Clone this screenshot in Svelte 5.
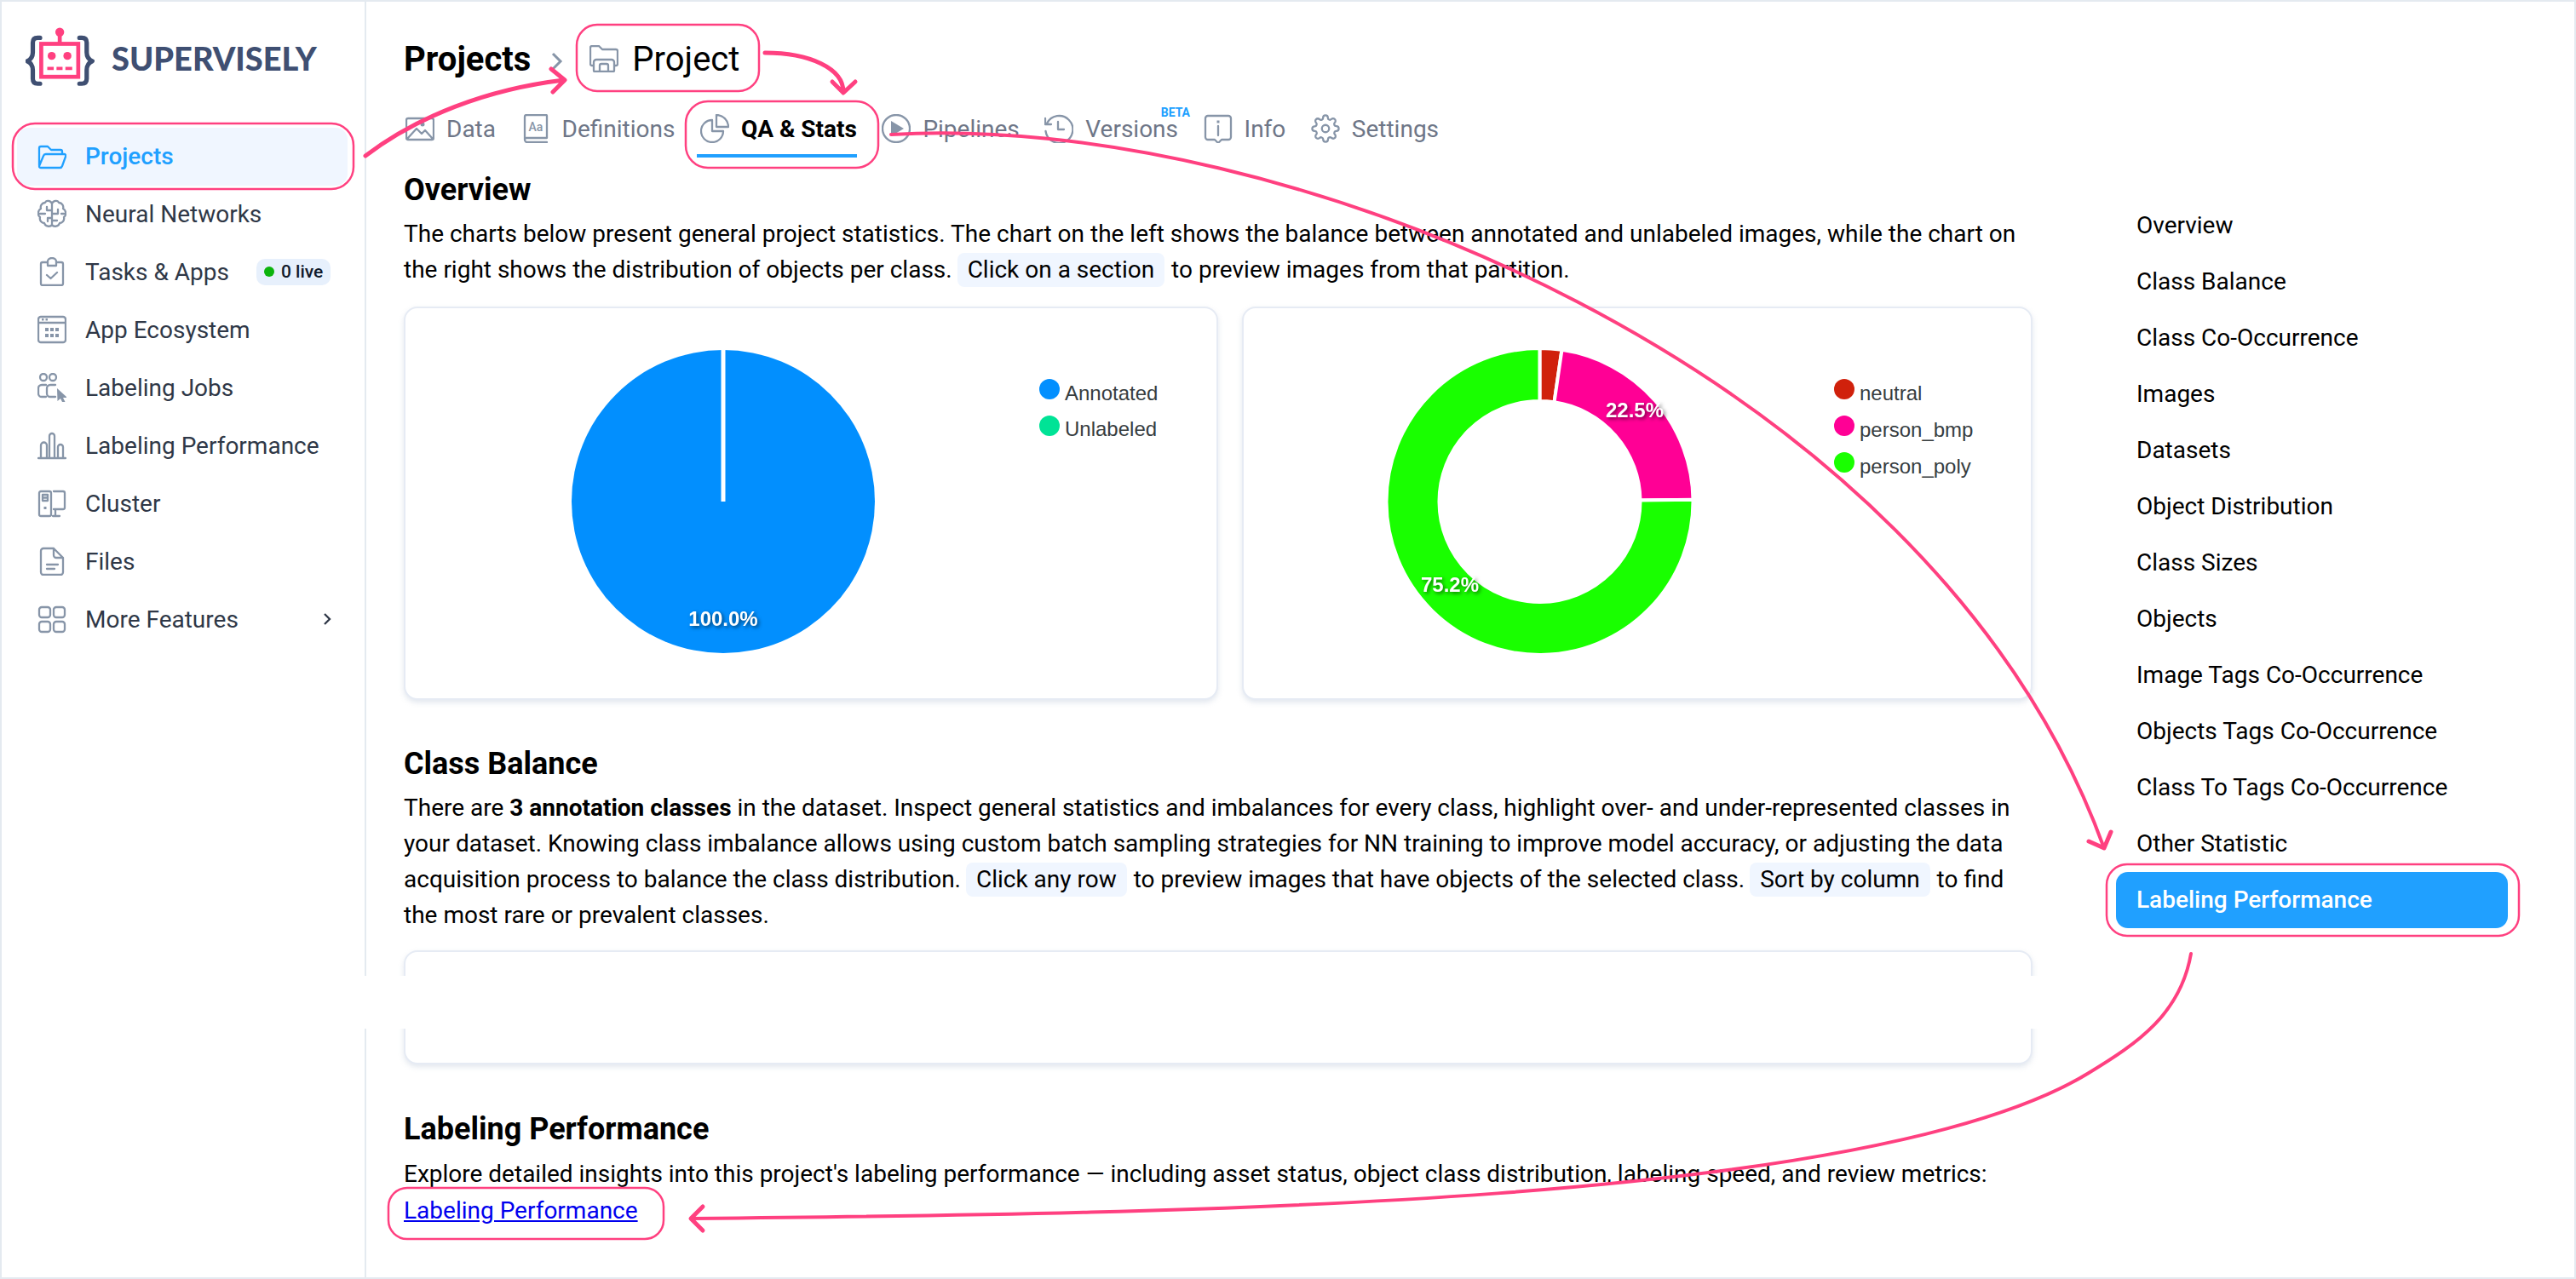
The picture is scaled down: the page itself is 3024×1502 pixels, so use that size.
<script>
  const sideItems = [
    { label: 'Projects', active: true, d: 'M2 28V8a2 2 0 0 1 2-2h8l4 4h11a2 2 0 0 1 2 2v3M2 29 7 17a3 3 0 0 1 3-2h21a2 2 0 0 1 2 3l-4 11a3 3 0 0 1-3 2H4a2 2 0 0 1-2-2z' },
    { label: 'Neural Networks', d: 'M17 4V30M17 5C15 1 10 1 9 4 5 4 3 8 4 11 0 13 0 19 3 21 2 25 5 28 8 28 9 32 15 33 17 30M17 5C19 1 24 1 25 4 29 4 31 8 30 11 34 13 34 19 31 21 32 25 29 28 26 28 25 32 19 33 17 30M17 13H11V9M17 22H12V26M3 17H9M17 17H24V12M17 25H23M31 17H28' },
    { label: 'Tasks & Apps', badge: '0 live', d: 'M11 6H6A2 2 0 0 0 4 8V31A2 2 0 0 0 6 33H28A2 2 0 0 0 30 31V8A2 2 0 0 0 28 6H23M12 10V5A5 4 0 0 1 22 5V10ZM11 21 15.500 25 23 18' },
    { label: 'App Ecosystem', d: 'M4 2H30A3 3 0 0 1 33 5V29A3 3 0 0 1 30 32H4A3 3 0 0 1 1 29V5A3 3 0 0 1 4 2ZM1 9H33', f: 'M5 4h2.500v2.500H5zM9.500 4H12v2.500H9.500zM9 15h4v4H9zM15 15h4v4h-4zM21 15h4v4h-4zM9 22h4v4H9zM15 22h4v4h-4zM21 22h4v4h-4z' },
    { label: 'Labeling Jobs', d: 'M11 5A4 4 0 1 1 3 5 4 4 0 1 1 11 5ZM22 5A4 4 0 1 1 14 5 4 4 0 1 1 22 5ZM10 14H5A4 4 0 0 0 1 18V24A4 4 0 0 0 5 28H10M21 14H15A4 4 0 0 0 11 18V24A4 4 0 0 0 15 28H21', f: 'M23 18 35 29 30 29 33 35 30 36 27 30 23.500 33Z' },
    { label: 'Labeling Performance', d: 'M1 32H33M4 32V17A3 3 0 0 1 11 17V32M14 32V6A3 3 0 0 1 20 6V32M24 32V19A3 3 0 0 1 30 19V32' },
    { label: 'Cluster', d: 'M4 3H14A2 2 0 0 1 16 5V30A2 2 0 0 1 14 32H4A2 2 0 0 1 2 30V5A2 2 0 0 1 4 3ZM19 3H30A2 2 0 0 1 32 5V22A2 2 0 0 1 30 24H19M21 24V31M18 32H26M6 7H12V14H6ZM6 10.500H12', f: 'M7.500 21h3v3h-3z' },
    { label: 'Files', d: 'M7 2H19L30 13V30A3 3 0 0 1 27 33H7A3 3 0 0 1 4 30V5A3 3 0 0 1 7 2ZM19 2V10A3 3 0 0 0 22 13H30M11 21H24M11 26H20' },
    { label: 'More Features', chevron: true, d: 'M5 3H12A3 3 0 0 1 15 6V12A3 3 0 0 1 12 15H5A3 3 0 0 1 2 12V6A3 3 0 0 1 5 3ZM22 3H29A3 3 0 0 1 32 6V12A3 3 0 0 1 29 15H22A3 3 0 0 1 19 12V6A3 3 0 0 1 22 3ZM5 20H12A3 3 0 0 1 15 23V29A3 3 0 0 1 12 32H5A3 3 0 0 1 2 29V23A3 3 0 0 1 5 20ZM22 20H29A3 3 0 0 1 32 23V29A3 3 0 0 1 29 32H22A3 3 0 0 1 19 29V23A3 3 0 0 1 22 20Z' }
  ];

  const gear = 'M19.400 15a1.650 1.650 0 0 0 .33 1.820l.06.06a2 2 0 0 1 0 2.830 2 2 0 0 1-2.830 0l-.06-.06a1.650 1.650 0 0 0-1.820-.33 1.650 1.650 0 0 0-1 1.510V21a2 2 0 0 1-2 2 2 2 0 0 1-2-2v-.09A1.650 1.650 0 0 0 9 19.400a1.650 1.650 0 0 0-1.820.33l-.06.06a2 2 0 0 1-2.830 0 2 2 0 0 1 0-2.830l.06-.06a1.650 1.650 0 0 0 .33-1.820 1.650 1.650 0 0 0-1.510-1H3a2 2 0 0 1-2-2 2 2 0 0 1 2-2h.09A1.650 1.650 0 0 0 4.600 9a1.650 1.650 0 0 0-.33-1.820l-.06-.06a2 2 0 0 1 0-2.830 2 2 0 0 1 2.830 0l.06.06a1.650 1.650 0 0 0 1.820.33H9a1.650 1.650 0 0 0 1-1.510V3a2 2 0 0 1 2-2 2 2 0 0 1 2 2v.09a1.650 1.650 0 0 0 1 1.510 1.650 1.650 0 0 0 1.820-.33l.06-.06a2 2 0 0 1 2.830 0 2 2 0 0 1 0 2.830l-.06.06a1.650 1.650 0 0 0-.33 1.820V9a1.650 1.650 0 0 0 1.510 1H21a2 2 0 0 1 2 2 2 2 0 0 1-2 2h-.09a1.650 1.650 0 0 0-1.510 1zM15 12a3 3 0 1 1-6 0 3 3 0 1 1 6 0z';

  const tabs = [
    { label: 'Data', d: 'M3 5H31A2 2 0 0 1 33 7V28A2 2 0 0 1 31 30H3A2 2 0 0 1 1 28V7A2 2 0 0 1 3 5ZM2 29 13 17 19 23 23 19 32 29', f: 'M20 9.500a2.500 2.500 0 1 1 0 5 2.500 2.500 0 0 1 0-5z' },
    { label: 'Definitions', d: 'M6 1H29A1 1 0 0 1 30 2V28H6A2 2 0 0 0 4 30V3A2 2 0 0 1 6 1ZM4 30A3 3 0 0 0 7 33H30', aa: true },
    { label: 'QA & Stats', active: true, d: 'M14 7A13 13 0 1 0 27 20H14ZM19 1A14 14 0 0 1 33 15H19Z' },
    { label: 'Pipelines', d: 'M33 17A16 16 0 1 1 1 17 16 16 0 1 1 33 17Z', f: 'M11 8 26 17 11 26Z' },
    { label: 'Versions', beta: true, d: 'M3 11A16 16 0 1 1 1.500 20M1 5V12H8M16 9V18H23' },
    { label: 'Info', d: 'M5 2H29A3 3 0 0 1 32 5V27A3 3 0 0 1 29 30H21L17 34 13 30H5A3 3 0 0 1 2 27V5A3 3 0 0 1 5 2ZM17 14V25', f: 'M15.500 7.500h3v3h-3z' },
    { label: 'Settings', vb: '0 0 24 24', sw: 1.6, d: gear }
  ];

  const toc = ['Overview', 'Class Balance', 'Class Co-Occurrence', 'Images', 'Datasets', 'Object Distribution', 'Class Sizes', 'Objects', 'Image Tags Co-Occurrence', 'Objects Tags Co-Occurrence', 'Class To Tags Co-Occurrence', 'Other Statistic'];

  function pt(cx, cy, r, deg) {
    const a = ((deg - 90) * Math.PI) / 180;
    return `${cx + r * Math.cos(a)} ${cy + r * Math.sin(a)}`;
  }
  function arc(cx, cy, r0, r1, a0, a1) {
    const big = a1 - a0 > 180 ? 1 : 0;
    return `M${pt(cx, cy, r1, a0)}A${r1} ${r1} 0 ${big} 1 ${pt(cx, cy, r1, a1)}L${pt(cx, cy, r0, a1)}A${r0} ${r0} 0 ${big} 0 ${pt(cx, cy, r0, a0)}Z`;
  }
  const donut = [
    { color: '#d0210c', a0: 0, a1: 8.3 },
    { color: '#ff0095', a0: 8.3, a1: 89.3 },
    { color: '#19ff00', a0: 89.3, a1: 359.99 }
  ];
</script>

{#snippet icon(ic, cls)}
  <svg class={cls} viewBox={ic.vb || '0 0 34 34'} aria-hidden="true">
    <path class="ln" style:stroke-width={ic.sw} d={ic.d} />
    {#if ic.f}<path class="fl" d={ic.f} />{/if}
    {#if ic.aa}<text x="17" y="20" class="aa">Aa</text>{/if}
  </svg>
{/snippet}

<div class="frame">
  <aside class="side">
    <div class="brand">
      <svg class="logo" viewBox="0 0 90 76" aria-hidden="true">
        <path class="brace" d="M18 13H15Q9 13 9 19V31Q9 39 2 42 9 45 9 53V64Q9 70 15 70H18" />
        <path class="brace" d="M67 13H70Q76 13 76 19V31Q76 39 83 42 76 45 76 53V64Q76 70 70 70H67" />
        <rect class="bot" x="19.500" y="20.500" width="46" height="41" />
        <line class="bot" x1="42.500" y1="8" x2="42.500" y2="20" />
        <circle class="botf" cx="42.500" cy="6" r="5.500" />
        <circle class="botf" cx="32.500" cy="35.500" r="5" />
        <circle class="botf" cx="52" cy="35.500" r="5" />
        <path class="mouth" d="M27 51H35M38.500 51H46M49.500 51H58" />
      </svg>
      <span class="word">SUPERVISELY</span>
    </div>
    <nav class="side-nav">
      {#each sideItems as it}
        <div class="side-item" class:on={it.active}>
          {@render icon(it, 'ico')}
          <span>{it.label}</span>
          {#if it.badge}<span class="badge"><i></i>{it.badge}</span>{/if}
          {#if it.chevron}
            <svg class="chev" viewBox="0 0 12 16" aria-hidden="true"><path d="M3 2l6 6-6 6" /></svg>
          {/if}
        </div>
      {/each}
    </nav>
  </aside>

  <main class="main">
    <header class="crumbs">
      <span class="crumb-root">Projects</span>
      <svg class="crumb-sep" viewBox="0 0 14 22" aria-hidden="true"><path d="M2 2l9 9-9 9" /></svg>
      <svg class="crumb-ico" viewBox="0 0 34 32" aria-hidden="true">
        <path class="ln" d="M5 24H3A2 2 0 0 1 1 22V3A2 2 0 0 1 3 1H11L15 5H31A2 2 0 0 1 33 7V22A2 2 0 0 1 31 24H29M5 30V20A3 3 0 0 1 8 17H26A3 3 0 0 1 29 20V30A1 1 0 0 1 28 31H6A1 1 0 0 1 5 30ZM12 31V24A2 2 0 0 1 14 22H20A2 2 0 0 1 22 24V31" />
      </svg>
      <span class="crumb-cur">Project</span>
    </header>

    <div class="tabs">
      {#each tabs as t}
        <div class="tab" class:on={t.active}>
          {@render icon(t, 'ico')}
          <span class="tab-label">{t.label}{#if t.beta}<b class="beta">BETA</b>{/if}</span>
        </div>
      {/each}
    </div>

    <h2>Overview</h2>
    <p>The charts below present general project statistics. The chart on the left shows the balance between annotated and unlabeled images, while the chart on the right shows the distribution of objects per class. <span class="chip">Click on a section</span> to preview images from that partition.</p>

    <div class="charts">
      <div class="card">
        <svg class="chart" viewBox="0 0 952 458" aria-label="Annotated versus unlabeled">
          <circle cx="373" cy="227" r="178" fill="#028ffe" />
          <line x1="373" y1="47" x2="373" y2="227" stroke="#fff" stroke-width="5" />
          <text class="pct" x="373" y="373">100.0%</text>
          <circle cx="756" cy="95" r="12" fill="#028ffe" />
          <text class="lg" x="774" y="108">Annotated</text>
          <circle cx="756" cy="138" r="12" fill="#00e396" />
          <text class="lg" x="774" y="150">Unlabeled</text>
        </svg>
      </div>
      <div class="card">
        <svg class="chart" viewBox="0 0 924 458" aria-label="Objects per class">
          {#each donut as s}
            <path d={arc(347.500, 227, 118, 180, s.a0, s.a1)} fill={s.color} stroke="#fff" stroke-width="4" />
          {/each}
          <text class="pct" x="459" y="128">22.5%</text>
          <text class="pct" x="242" y="333">75.2%</text>
          <circle cx="705" cy="95" r="12" fill="#d0210c" />
          <text class="lg" x="723" y="108">neutral</text>
          <circle cx="705" cy="138" r="12" fill="#ff0095" />
          <text class="lg" x="723" y="151">person_bmp</text>
          <circle cx="705" cy="181" r="12" fill="#19ff00" />
          <text class="lg" x="723" y="194">person_poly</text>
        </svg>
      </div>
    </div>

    <h2 class="sec">Class Balance</h2>
    <p>There are <b>3 annotation classes</b> in the dataset. Inspect general statistics and imbalances for every class, highlight over- and under-represented classes in your dataset. Knowing class imbalance allows using custom batch sampling strategies for NN training to improve model accuracy, or adjusting the data acquisition process to balance the class distribution. <span class="chip">Click any row</span> to preview images that have objects of the selected class. <span class="chip">Sort by column</span> to find the most rare or prevalent classes.</p>
    <div class="card table-card"></div>

    <h2 class="sec last">Labeling Performance</h2>
    <p>Explore detailed insights into this project's labeling performance — including asset status, object class distribution, labeling speed, and review metrics:<br /><a href="#lp">Labeling Performance</a></p>
  </main>

  <nav class="toc">
    {#each toc as item}
      <div class="toc-item">{item}</div>
    {/each}
    <div class="toc-item current">Labeling Performance</div>
  </nav>

  <div class="patch"></div>

  <svg class="marks" viewBox="0 0 3024 1502" aria-hidden="true">
    <rect x="15" y="145" width="400" height="77" rx="26" />
    <rect x="677" y="29" width="214" height="78" rx="24" />
    <rect x="805" y="119" width="226" height="78" rx="26" />
    <rect x="2473" y="1015" width="484" height="84" rx="24" />
    <rect x="456" y="1395" width="323" height="60" rx="22" />

    <path class="thick" d="M429 183C490 137 570 105 662 94M647 81 663 94 649 108" />
    <path class="thick" d="M898 62C950 62 990 80 990 108M977 96 990 109 1004 96" />
    <path class="arrow" d="M1046 158C1500 130 2265 430 2470 996" />
    <path class="thick" d="M2452 988 2470 996 2478 977" />
    <path class="arrow" d="M2572 1120C2560 1190 2510 1225 2452 1260 2200 1415 1400 1425 812 1431" />
    <path class="thick" d="M825 1417 811 1431 825 1445" />
  </svg>
</div>

<style>
  :global(body) { margin: 0; background: #fff; }
  .frame {
    position: relative; box-sizing: border-box; width: 3024px; height: 1502px; overflow: hidden;
    display: grid; grid-template-columns: 428px 1956px 636px;
    border: 2px solid #e4eaf0; background: #fff; color: #000;
    font-family: Roboto, "Liberation Sans", sans-serif; font-size: 28px;
  }
  .ln { fill: none; stroke: currentColor; stroke-width: 2.3; stroke-linecap: round; stroke-linejoin: round; }
  .fl { fill: currentColor; }
  .aa { font-family: Roboto, sans-serif; font-size: 14px; font-weight: 500; fill: currentColor; text-anchor: middle; }

  .side { box-sizing: border-box; border-right: 2px solid #e4eaf0; }
  .brand { display: flex; align-items: center; gap: 16px; height: 147px; padding: 0 0 16px 28px; box-sizing: border-box; }
  .logo { width: 85px; height: 72px; flex: none; }
  .brace { fill: none; stroke: #3f4f72; stroke-width: 5.500; stroke-linejoin: round; stroke-linecap: round; }
  .bot { fill: none; stroke: #ff4080; stroke-width: 5; }
  .botf { fill: #ff4080; }
  .mouth { fill: none; stroke: #ff4080; stroke-width: 4; }
  .word { font-family: Lato, sans-serif; font-weight: 900; font-size: 38px; letter-spacing: 0; color: #3f4f72; }
  .side-nav { display: flex; flex-direction: column; margin: 1px 0 0 18px; width: 388px; }
  .side-item { position: relative; box-sizing: border-box; display: flex; align-items: center; height: 68px; padding: 0 0 2px 24px; border-radius: 14px; color: #2f3847; }
  .side-item.on { background: #f0f6ff; color: #20a0ff; font-weight: 500; }
  .side-item :global(.ico) { width: 34px; height: 34px; margin-right: 22px; flex: none; color: #8795a8; }
  .side-item.on :global(.ico) { color: #20a0ff; }
  .badge { display: inline-flex; align-items: center; gap: 8px; margin-left: 32px; height: 31px; padding: 0 9px; border-radius: 10px; background: #e7f0fc; color: #111a2b; font-size: 21px; font-weight: 500; }
  .badge i { width: 12px; height: 12px; border-radius: 50%; background: #0cb40c; }
  .chev { position: absolute; right: 18px; top: 25px; width: 12px; height: 16px; }
  .chev path { fill: none; stroke: #2f3847; stroke-width: 2.300; }

  .main { padding-left: 44px; min-width: 0; }
  .crumbs { display: flex; align-items: center; height: 60px; margin-top: 37px; }
  .crumb-root { font-size: 40px; font-weight: 700; }
  .crumb-sep { width: 14px; height: 22px; margin: 6px 31px 0 24px; }
  .crumb-sep path { fill: none; stroke: #8795a8; stroke-width: 3; }
  .crumb-ico { width: 34px; height: 32px; margin-right: 16px; color: #8795a8; }
  .crumb-cur { font-size: 40px; }

  .tabs { display: flex; gap: 29.500px; margin-top: 22px; height: 63px; margin-bottom: 16px; padding-left: 2px; }
  .tab { display: flex; align-items: center; height: 60px; border-bottom: 4px solid transparent; color: #6e7687; }
  .tab :global(.ico) { width: 34px; height: 34px; margin-right: 14px; flex: none; color: #8795a8; }
  .tab.on { color: #000; font-weight: 700; border-bottom-color: #20a0ff; padding-left: 4px; margin-left: -4px; }
  .tab-label { position: relative; }
  .beta { position: absolute; right: -14px; top: -11px; font-size: 14px; font-weight: 700; color: #20a0ff; }

  h2 { margin: 0 0 8px; font-size: 36px; line-height: 46px; font-weight: 700; }
  h2.sec { margin-top: 52px; }
  h2.sec.last { margin-top: 53px; margin-bottom: 9px; }
  p { margin: 0; line-height: 42px; width: 1912px; }
  .chip { display: inline-block; line-height: 40px; padding: 0 12px; margin: 0 1px 0 -1px; border-radius: 8px; background: #f0f6ff; }
  a { display: inline-block; margin-top: 1px; color: #0000ee; text-decoration: underline; }

  .charts { display: grid; grid-template-columns: 956px 928px; gap: 28px; margin-top: 22px; }
  .card { box-sizing: border-box; height: 462px; border: 2px solid #e6ebf4; border-radius: 16px; background: #fff; box-shadow: 0 3px 6px rgba(160, 175, 200, .3); }
  .chart { display: block; width: 100%; height: 100%; }
  .table-card { width: 1912px; height: 134px; margin-top: 20px; }
  .lg { font-family: "Liberation Sans", Arial, sans-serif; font-size: 24px; fill: #373d3f; }
  .pct { font-family: "Liberation Sans", Arial, sans-serif; font-size: 24px; font-weight: 700; fill: #fff; text-anchor: middle; filter: drop-shadow(2px 2px 2px rgba(0, 0, 0, .55)); }

  .toc { display: flex; flex-direction: column; padding: 230px 0 0 98px; }
  .toc-item { box-sizing: border-box; width: 460px; height: 66px; line-height: 66px; padding-left: 24px; border-radius: 14px; }
  .toc-item.current { background: #20a0ff; color: #fff; font-weight: 500; }

  .patch { position: absolute; left: 426px; top: 1144px; width: 1964px; height: 62px; background: #fff; }
  .marks { position: absolute; inset: -2px; width: 3024px; height: 1502px; pointer-events: none; }
  .marks rect { fill: none; stroke: #ff4080; stroke-width: 2.500; }
  .marks path { fill: none; stroke: #ff4080; stroke-linecap: round; stroke-linejoin: round; }
  .thick { stroke-width: 5; }
  .arrow { stroke-width: 4; }
</style>
